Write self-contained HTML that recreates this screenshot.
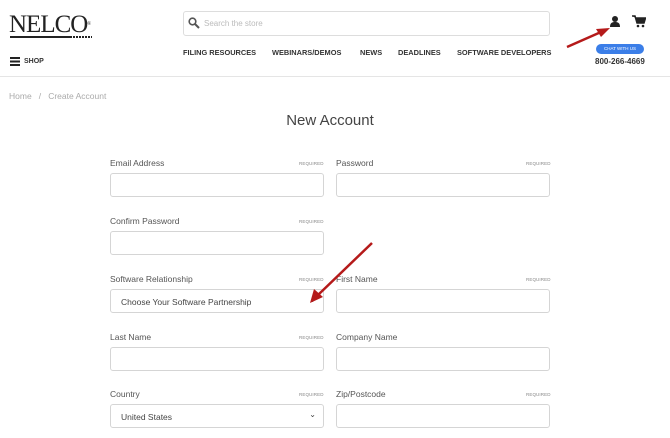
<!DOCTYPE html>
<html><head><style>
*{box-sizing:border-box;margin:0;padding:0}
body{width:670px;height:438px;overflow:hidden;background:#fff;font-family:"Liberation Sans",sans-serif;position:relative;color:#333}
.abs{position:absolute}
.nav{font-size:7.4px;font-weight:bold;color:#333;top:48px}
.lbl{font-size:8.5px;color:#555}
.req{font-size:4.5px;color:#888;letter-spacing:.1px}
.inp{border:1px solid #d5d5d5;border-radius:3px;height:24px;width:214px;background:#fff}
.sel{font-size:8.5px;color:#444;padding:7px 10px}
</style></head><body>
<div class="abs" style="left:9px;top:12px;font-family:'Liberation Serif',serif;font-size:25px;color:#222;letter-spacing:-1px;line-height:25px">NELCO<span style="font-size:5px;vertical-align:top">®</span></div>
<div class="abs" style="left:10px;top:36px;width:60px;height:2px;background:#222"></div>
<div class="abs" style="left:70px;top:36px;width:22px;height:2px;background:repeating-linear-gradient(90deg,#222 0 2px,transparent 2px 3px)"></div>
<div class="abs" style="left:10px;top:57px;width:10px;height:1.5px;background:#222;box-shadow:0 3.5px 0 #222,0 7px 0 #222"></div>
<div class="abs" style="left:24px;top:58px;font-size:7px;font-weight:bold">SHOP</div>
<div class="abs" style="left:183px;top:11px;width:367px;height:25px;border:1px solid #ddd;border-radius:3px"></div>
<svg class="abs" style="left:188px;top:17px" width="12" height="12" viewBox="0 0 12 12"><circle cx="4.5" cy="4.5" r="3.3" fill="none" stroke="#555" stroke-width="1.6"/><path d="M7 7l4 4" stroke="#555" stroke-width="2"/></svg>
<div class="abs" style="left:204px;top:19px;font-size:8px;color:#bbb">Search the store</div>
<div class="abs nav" style="left:183px">FILING RESOURCES</div>
<div class="abs nav" style="left:272px">WEBINARS/DEMOS</div>
<div class="abs nav" style="left:360px">NEWS</div>
<div class="abs nav" style="left:398px">DEADLINES</div>
<div class="abs nav" style="left:457px">SOFTWARE DEVELOPERS</div>
<svg class="abs" style="left:609px;top:15px" width="12" height="13" viewBox="0 0 12 13"><circle cx="6" cy="4" r="3" fill="#222"/><path d="M1 12c0-4 2-5 5-5s5 1 5 5z" fill="#222"/></svg>
<svg class="abs" style="left:632px;top:15px" width="14" height="13" viewBox="0 0 14 13"><path d="M0 1h3l2 7h7l1.5-5H4" fill="#222" stroke="#222" stroke-width="1.5"/><circle cx="6" cy="11" r="1.3" fill="#222"/><circle cx="11" cy="11" r="1.3" fill="#222"/></svg>
<div class="abs" style="left:596px;top:44px;width:48px;height:10px;background:#3b7ee8;border-radius:6px;color:#fff;font-size:4.5px;text-align:center;line-height:10px">CHAT WITH US</div>
<div class="abs" style="left:595px;top:57px;font-size:8px;font-weight:bold;color:#333">800-266-4669</div>
<div class="abs" style="left:0;top:76px;width:670px;height:1px;background:#e5e5e5"></div>
<div class="abs" style="left:9px;top:91px;font-size:8.5px;color:#aaa">Home &nbsp;&nbsp;/&nbsp;&nbsp; Create Account</div>
<div class="abs" style="left:0;width:660px;top:112px;text-align:center;font-size:15px;color:#444">New Account</div>

<div class="abs lbl" style="left:110px;top:158px">Email Address</div><div class="abs req" style="left:299px;top:161px">REQUIRED</div><div class="abs inp" style="left:110px;top:173px"></div>
<div class="abs lbl" style="left:336px;top:158px">Password</div><div class="abs req" style="left:526px;top:161px">REQUIRED</div><div class="abs inp" style="left:336px;top:173px"></div>
<div class="abs lbl" style="left:110px;top:216px">Confirm Password</div><div class="abs req" style="left:299px;top:219px">REQUIRED</div><div class="abs inp" style="left:110px;top:231px"></div>
<div class="abs lbl" style="left:110px;top:274px">Software Relationship</div><div class="abs req" style="left:299px;top:277px">REQUIRED</div><div class="abs inp sel" style="left:110px;top:289px">Choose Your Software Partnership<span style="position:absolute;right:7px;top:5px;font-size:8px">&#8964;</span></div>
<div class="abs lbl" style="left:336px;top:274px">First Name</div><div class="abs req" style="left:526px;top:277px">REQUIRED</div><div class="abs inp" style="left:336px;top:289px"></div>
<div class="abs lbl" style="left:110px;top:332px">Last Name</div><div class="abs req" style="left:299px;top:335px">REQUIRED</div><div class="abs inp" style="left:110px;top:347px"></div>
<div class="abs lbl" style="left:336px;top:332px">Company Name</div><div class="abs inp" style="left:336px;top:347px"></div>
<div class="abs lbl" style="left:110px;top:389px">Country</div><div class="abs req" style="left:299px;top:392px">REQUIRED</div><div class="abs inp sel" style="left:110px;top:404px">United States<span style="position:absolute;right:7px;top:5px;font-size:8px">&#8964;</span></div>
<div class="abs lbl" style="left:336px;top:389px">Zip/Postcode</div><div class="abs req" style="left:526px;top:392px">REQUIRED</div><div class="abs inp" style="left:336px;top:404px"></div>

<svg class="abs" style="left:0;top:0" width="670" height="438">
<path d="M567 47L601 32" stroke="#b51a1a" stroke-width="2.5"/><path d="M610 28L596 29L601 37z" fill="#b51a1a"/>
<path d="M372 243L318 295" stroke="#b51a1a" stroke-width="2.5"/><path d="M310 303L314 289L323 297z" fill="#b51a1a"/>
</svg>
</body></html>
